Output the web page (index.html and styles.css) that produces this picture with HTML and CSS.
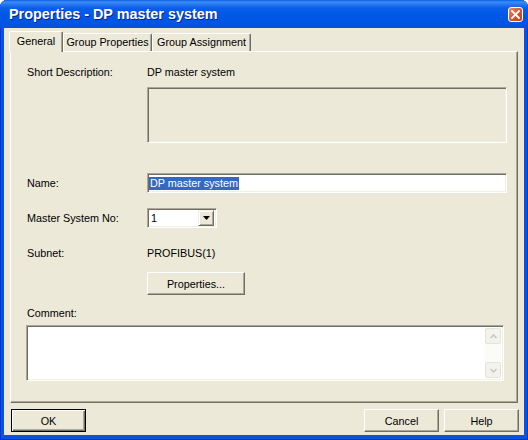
FILE: index.html
```html
<!DOCTYPE html>
<html>
<head>
<meta charset="utf-8">
<title>Properties - DP master system</title>
<link rel="stylesheet" href="styles.css">
</head>
<body>
<div class="window">
  <div class="titlebar">
    <span class="title">Properties - DP master system</span>
    <span class="close">
      <svg width="9" height="9" viewBox="0 0 9 9"><path d="M1 1 L8 8 M8 1 L1 8" stroke="#fff" stroke-width="1.8" stroke-linecap="square"/></svg>
    </span>
  </div>
  <div class="client">
    <div class="tabs">
      <div class="tab active">General</div>
      <div class="tab t2">Group Properties</div>
      <div class="tab t3">Group Assignment</div>
    </div>
    <div class="panel">
      <div class="row r-short"><span class="label">Short Description:</span><span class="value">DP master system</span></div>
      <div class="descbox"></div>
      <div class="row r-name"><span class="label">Name:</span><div class="input"><span class="sel">DP master system</span></div></div>
      <div class="row r-master"><span class="label">Master System No:</span>
        <div class="combo"><span class="combo-text">1</span><span class="drop"><svg width="7" height="4" viewBox="0 0 7 4"><path d="M0 0 H7 L3.5 4 Z" fill="#000"/></svg></span></div>
      </div>
      <div class="row r-subnet"><span class="label">Subnet:</span><span class="value">PROFIBUS(1)</span></div>
      <div class="row r-btn"><button class="btn props">Properties...</button></div>
      <div class="comment-label">Comment:</div>
      <div class="comment">
        <div class="scrollbar">
          <span class="sbtn"><svg width="7" height="5" viewBox="0 0 7 5"><path d="M0.5 4 L3.5 1 L6.5 4" fill="none" stroke="#c9c7bb" stroke-width="1.5"/></svg></span>
          <span class="track"></span>
          <span class="sbtn"><svg width="7" height="5" viewBox="0 0 7 5"><path d="M0.5 1 L3.5 4 L6.5 1" fill="none" stroke="#c9c7bb" stroke-width="1.5"/></svg></span>
        </div>
      </div>
    </div>
    <div class="buttons">
      <button class="btn default">OK</button>
      <span class="spacer"></span>
      <button class="btn">Cancel</button>
      <button class="btn">Help</button>
    </div>
  </div>
</div>
</body>
</html>
```
FILE: styles.css
```css
* { box-sizing: border-box; }
html, body { margin: 0; padding: 0; background: #ffffff; }
body {
  font-family: "Liberation Sans", Arial, sans-serif;
  font-size: 10.8px;
  color: #000;
}
.window {
  width: 528px;
  height: 440px;
  background: #0855dd;
  border-radius: 7px 7px 0 0;
  display: flex;
  flex-direction: column;
  box-shadow: inset 1px 0 #0831d9, inset -1px 0 #0831d9, inset 0 -1px #0831d9;
}
.titlebar {
  height: 28px;
  flex: none;
  display: flex;
  align-items: center;
  padding-left: 9px;
  border-radius: 7px 7px 0 0;
  background: linear-gradient(to bottom, #0a5fe4 0, #3d8ef7 2px, #2a7af0 4px, #0a5fe9 8px, #0058e6 50%, #0055e3 85%, #0a4fd6 100%);
}
.title {
  color: #fff;
  font-weight: bold;
  font-size: 14.4px;
  text-shadow: 1px 1px #0f1f8f;
  line-height: 16px;
}
.close {
  margin-left: auto;
  margin-right: 5px;
  width: 15px;
  height: 15px;
  border: 1px solid #fff;
  border-radius: 3px;
  background: linear-gradient(135deg, #e88a6b 0%, #d9572f 50%, #c13f1b 100%);
  display: flex;
  align-items: center;
  justify-content: center;
}
.client {
  flex: 1;
  margin: 0 4px 5px 4px;
  background: #ece9d8;
  padding: 3px 6px 0 6px;
  display: flex;
  flex-direction: column;
}
.tabs {
  height: 20px;
  display: flex;
  align-items: flex-end;
  padding-left: 0;
  position: relative;
  z-index: 1;
}
.tab {
  height: 18px;
  line-height: 16px;
  text-align: center;
  border-top: 1px solid #fff;
  border-left: 1px solid #fff;
  border-right: 1px solid #716f64;
  box-shadow: inset -1px 0 #aca899;
  border-radius: 2px 2px 0 0;
  background: #ece9d8;
}
.tab.active {
  width: 54px;
  height: 21px;
  margin-left: -1px;
  margin-bottom: -1px;
  line-height: 19px;
  padding-bottom: 2px;
}
.tab.t2 { width: 89px; }
.tab.t3 { width: 99px; }
.panel {
  height: 352px;
  flex: none;
  border-top: 1px solid #fff;
  border-left: 1px solid #fff;
  border-right: 1px solid #716f64;
  border-bottom: 1px solid #716f64;
  box-shadow: inset -1px -1px #aca899;
  padding-left: 16px;
  background: #ece9d8;
}
.row {
  display: flex;
  align-items: center;
}
.label {
  width: 120px;
  flex: none;
  line-height: 13px;
}
.value { line-height: 13px; }
.r-short { margin-top: 14px; height: 13px; }
.sunken {
  border: 1px solid;
}
.descbox, .input, .combo, .comment {
  border-top: 1px solid #aca899;
  border-left: 1px solid #aca899;
  border-right: 1px solid #fff;
  border-bottom: 1px solid #fff;
  box-shadow: inset 1px 1px #716f64, inset -1px -1px #f1efe2;
}
.descbox {
  margin-top: 8px;
  margin-left: 120px;
  width: 360px;
  height: 56px;
  background: #ece9d8;
}
.r-name { margin-top: 30px; height: 20px; }
.input {
  width: 360px;
  height: 20px;
  background: #fff;
  padding-left: 1px;
  display: flex;
  align-items: center;
}
.sel {
  background: #316ac5;
  color: #fff;
  line-height: 13px;
  padding: 0 1px;
}
.r-master { margin-top: 15px; height: 20px; }
.combo {
  width: 70px;
  height: 20px;
  background: #fff;
  display: flex;
  align-items: center;
  padding: 2px 2px 2px 2px;
}
.combo-text { flex: 1; padding-left: 1px; line-height: 13px; }
.drop {
  width: 16px;
  height: 16px;
  background: #ece9d8;
  border-top: 1px solid #f1efe2;
  border-left: 1px solid #f1efe2;
  border-right: 1px solid #716f64;
  border-bottom: 1px solid #716f64;
  box-shadow: inset 1px 1px #fff, inset -1px -1px #aca899;
  display: flex;
  align-items: center;
  justify-content: center;
}
.r-subnet { margin-top: 19px; height: 13px; }
.r-btn { margin-top: 12px; padding-left: 120px; }
.btn {
  font-family: inherit;
  font-size: inherit;
  color: #000;
  height: 23px;
  width: 75px;
  padding: 0;
  background: #ece9d8;
  border-top: 1px solid #fff;
  border-left: 1px solid #fff;
  border-right: 1px solid #716f64;
  border-bottom: 1px solid #716f64;
  box-shadow: inset -1px -1px #aca899;
  border-radius: 0;
}
.btn.props { width: 98px; }
.btn.default {
  border: 1px solid #000;
  box-shadow: inset 1px 1px #fff, inset -1px -1px #716f64, inset -2px -2px #aca899;
}
.comment-label { margin-top: 12px; line-height: 13px; height: 13px; }
.comment {
  margin-top: 5px;
  margin-left: -1px;
  width: 478px;
  height: 56px;
  background: #fff;
  display: flex;
  justify-content: flex-end;
  padding: 2px 2px 2px 2px;
}
.scrollbar {
  width: 16px;
  display: flex;
  flex-direction: column;
  background: #fbfbf8;
}
.sbtn {
  height: 16px;
  flex: none;
  border: 1px solid #e6e4da;
  border-radius: 2px;
  background: #f3f2ec;
  display: flex;
  align-items: center;
  justify-content: center;
}
.track { flex: 1; }
.buttons {
  margin-top: 6px;
  margin-left: 1px;
  margin-right: -1px;
  display: flex;
  gap: 5px;
}
.spacer { flex: 1; }
```
